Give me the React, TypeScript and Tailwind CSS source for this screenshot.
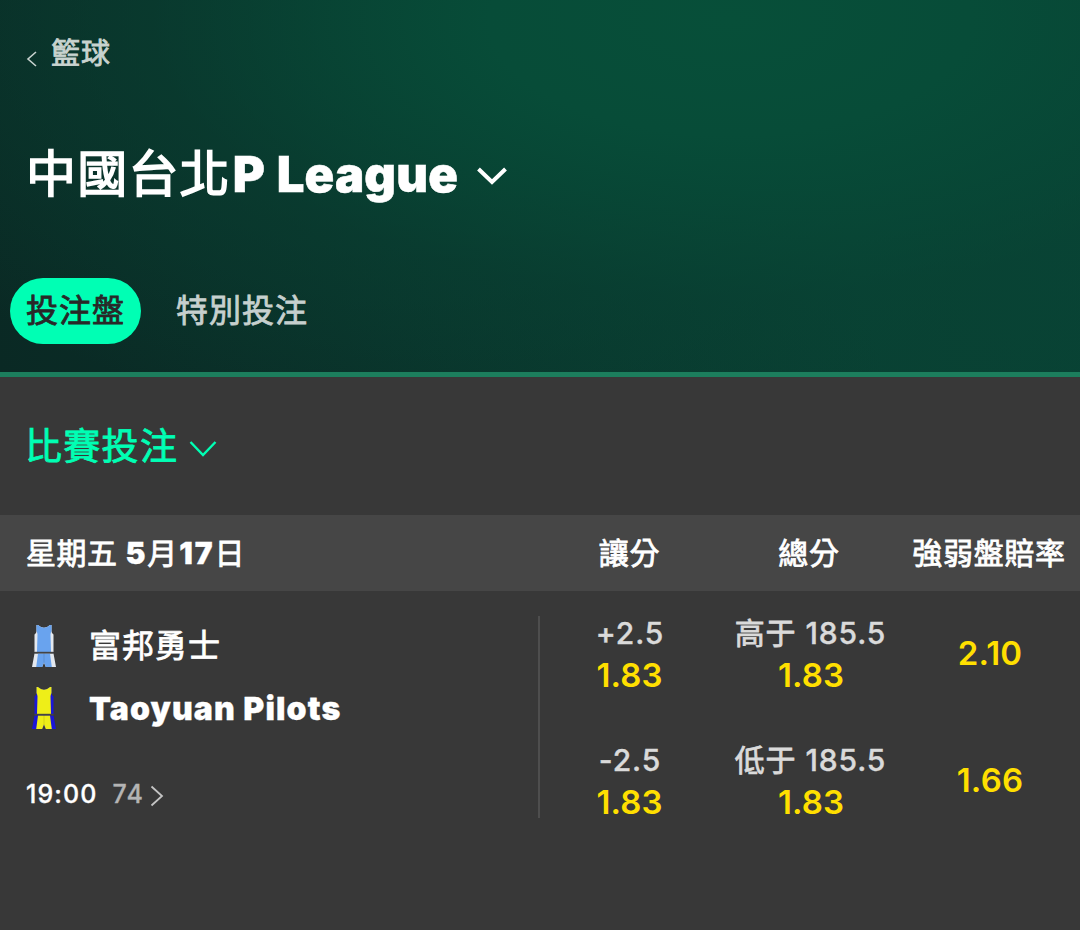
import type { ReactNode } from 'react';

type Odds = {
  id: string;
  handicap: string;
  handicapOdds: string;
  totalLabel: string;
  total: string;
  totalOdds: string;
  moneyline: string;
};

const odds: Odds[] = [
  {
    id: 'home',
    handicap: '+2.5',
    handicapOdds: '1.83',
    totalLabel: '高于',
    total: '185.5',
    totalOdds: '1.83',
    moneyline: '2.10',
  },
  {
    id: 'away',
    handicap: '-2.5',
    handicapOdds: '1.83',
    totalLabel: '低于',
    total: '185.5',
    totalOdds: '1.83',
    moneyline: '1.66',
  },
];

// Thickens the regular CJK weight to a medium one
function Han({ children }: { children: ReactNode }) {
  return (
    <span className="font-normal [-webkit-text-stroke:0.8px_currentColor]">{children}</span>
  );
}

function Chevron({ className, points, width }: { className: string; points: string; width: number }) {
  return (
    <svg className={className} fill="none" stroke="currentColor" strokeWidth={width}>
      <polyline points={points} />
    </svg>
  );
}

function Kit({ main, side }: { main: string; side: string }) {
  return (
    <svg className="h-[42px] w-6 shrink-0" viewBox="0 0 24 42">
      <path d="M4.5 0 L4.5 6 Q4.5 8 2.5 9.5 L2.5 27 H21.5 V9.5 Q19.5 8 19.5 6 L19.5 0 H18 Q12 5.5 6 0Z" fill={side} />
      <path d="M4.5 0 H6 Q12 5.5 18 0 H19.5 V6 Q18.5 8 18.5 9.5 L19 27 H5 L5.5 9.5 Q5.5 8 4.5 6Z" fill={main} />
      <path d="M2.5 28.5 H21.5 L24 42 H13.8 L12 37.5 L10.2 42 H0Z" fill={side} />
      <path d="M6 28.5 H18 L19.8 42 H13.8 L12 37.5 L10.2 42 H4.2Z" fill={main} />
      <path d="M2.5 27.6 H21.5" stroke="#444" strokeWidth="1.6" />
      <path d="M12 28.5 V38" stroke="#000" strokeOpacity="0.15" strokeWidth="0.8" />
    </svg>
  );
}

function OddsRow({ row }: { row: Odds }) {
  return (
    <div className="grid h-[127px] grid-cols-3 items-center text-center leading-[42px]">
      <div>
        <p className="text-[30px] font-medium tracking-[0.9px] text-[#dadada] [-webkit-text-stroke:0.4px_currentColor]">{row.handicap}</p>
        <p className="pr-[1px] text-[33px] font-semibold tracking-[0.1px] text-[#ffdf00]">{row.handicapOdds}</p>
      </div>
      <div className="pl-[2px]">
        <p className="-ml-[1px] text-[30px] font-medium tracking-[0.9px] whitespace-nowrap text-[#dadada] [-webkit-text-stroke:0.4px_currentColor]">
          <Han>{row.totalLabel}</Han> {row.total}
        </p>
        <p className="text-[33px] font-semibold tracking-[0.1px] text-[#ffdf00]">{row.totalOdds}</p>
      </div>
      <p className="pb-[1px] text-[33px] font-semibold tracking-[0.2px] text-[#ffdf00]">{row.moneyline}</p>
    </div>
  );
}

export default function App() {
  return (
    <div className="h-[930px] w-[1080px] overflow-hidden bg-[#383838] font-['Inter','Noto_Sans_CJK_TC',sans-serif] text-white">
      <header className="h-[377px] border-b-[5px] border-[#1c7e5d] bg-[#0a3029] bg-[radial-gradient(ellipse_960px_460px_at_730px_20px,#074f39_0%,#074c38_25%,#08443480_60%,transparent_100%),linear-gradient(75deg,#0a2924_0%,#0a3029_30%,#094033_75%,#084335_100%)]">
        <div className="flex h-[107px] items-center pl-[26px] text-[29px] tracking-[1px] text-[#c8d3cf]">
          <Chevron className="mt-[10px] mr-[14px] h-4 w-[11px]" points="10,1 2,8 10,15" width={1.6} />
          <Han>籃球</Han>
        </div>

        <div className="flex h-[135px] items-center pl-[26px] text-[49px]">
          <h1 className="font-black tracking-[0.2px] whitespace-nowrap [word-spacing:1.5px] [-webkit-text-stroke:0.5px_currentColor]">
            <span className="mr-[2px] text-[50px] font-normal tracking-[1.2px] [-webkit-text-stroke:1.6px_currentColor]">中國台北</span>P League
          </h1>
          <Chevron className="mt-[2px] ml-[18px] h-[20px] w-[32px]" points="2.5,3 16,16 29.5,3" width={4} />
        </div>

        <nav className="mt-[36px] flex h-[66px] items-center text-[32px] tracking-[1px]">
          <a className="ml-[10px] flex h-[66px] w-[131px] items-center justify-center rounded-full bg-[#00ffb4] pb-[1px] text-[#282828]">
            <Han>投注盤</Han>
          </a>
          <a className="ml-[35px] pb-[1px] text-[#c6d0ce]">
            <Han>特別投注</Han>
          </a>
        </nav>
      </header>

      <div className="flex h-[138px] items-center pl-[25px] text-[37px] tracking-[1.3px] text-[#00ffb4]">
        <span className="pt-[2px]">
          <Han>比賽投注</Han>
        </span>
        <Chevron className="mt-[6px] ml-[11px] h-[18px] w-7" points="1.5,2 14,15 26.5,2" width={2.4} />
      </div>

      <div className="grid h-[76px] grid-cols-[540px_180px_180px_180px] items-center bg-[#464646] text-[30px] tracking-[0.7px]">
        <p className="pl-[26px] text-[30px] font-black tracking-[1.9px] [-webkit-text-stroke:0.3px_currentColor]">
          <span className="tracking-[0.5px]">
            <Han>星期五</Han>
          </span>{' '}
          5<Han>月</Han>17<Han>日</Han>
        </p>
        <p className="pr-[1px] text-center"><Han>讓分</Han></p>
        <p className="pr-[2px] text-center"><Han>總分</Han></p>
        <p className="pr-[2px] text-center"><Han>強弱盤賠率</Han></p>
      </div>

      <div className="flex">
        <div className="flex w-[538px] flex-col pt-[34px] pl-8">
          <div className="flex h-[42px] items-center gap-[33px] text-[32px] tracking-[1px]">
            <Kit main="#69a3ee" side="#e4e8ee" />
            <Han>富邦勇士</Han>
          </div>
          <div className="mt-[20px] flex h-[42px] items-center gap-[33px]">
            <Kit main="#eeee18" side="#1a16d8" />
            <span className="pt-[2px] text-[32px] font-black tracking-[1.1px] [-webkit-text-stroke:0.3px_currentColor]">Taoyuan Pilots</span>
          </div>
          <div className="mt-[48px] -ml-[6px] flex h-[36px] items-center text-[25px] font-medium tracking-[1.1px] [-webkit-text-stroke:0.3px_currentColor]">
            <span>19:00</span>
            <span className="ml-[15px] text-[#b4b4b4]">74</span>
            <Chevron className="mt-[2px] ml-[6px] h-[22px] w-[14px] text-[#c4c4c4]" points="1.5,1.5 12,11 1.5,20.5" width={1.8} />
          </div>
        </div>
        <div className="mt-[25px] h-[202px] w-[2px] bg-[#4e4e4e]" />
        <div className="-mt-[1px] w-[540px]">
          {odds.map((row) => (
            <OddsRow key={row.id} row={row} />
          ))}
        </div>
      </div>
    </div>
  );
}
